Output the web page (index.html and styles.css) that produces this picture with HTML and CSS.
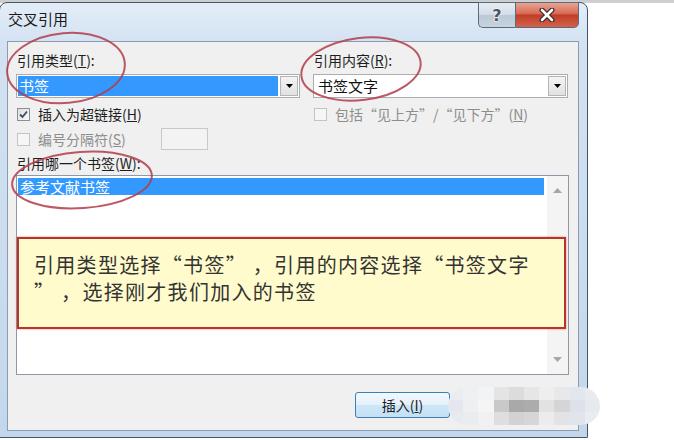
FILE: index.html
```html
<!DOCTYPE html>
<html lang="zh-CN">
<head>
    <meta charset="UTF-8">
    <title>交叉引用</title>
    <link rel="stylesheet" href="styles.css">
</head>
<body>
<div class="desk">
    <div class="window">
        <!-- title bar -->
        <div class="titlebar">
            <span class="title">交叉引用</span>
            <div class="caps">
                <div class="cap help">?</div>
                <div class="cap close">
                    <svg width="16" height="14" viewBox="0 0 16 14">
                        <path d="M3 2 L13 12 M13 2 L3 12" stroke="#3b2a28" stroke-width="5" stroke-linecap="round"/>
                        <path d="M3 2 L13 12 M13 2 L3 12" stroke="#fff" stroke-width="2.6" stroke-linecap="round"/>
                    </svg>
                </div>
            </div>
        </div>

        <div class="client">
            <div class="top-grid">
                <div class="label">引用类型(<u>T</u>):</div>
                <div class="label">引用内容(<u>R</u>):</div>

                <div class="combo">
                    <div class="combo-val sel">书签</div>
                    <div class="combo-arrow"><svg width="7" height="4" viewBox="0 0 7 4"><path d="M0 0 H7 L3.5 4 Z" fill="#000"/></svg></div>
                </div>
                <div class="combo">
                    <div class="combo-val">书签文字</div>
                    <div class="combo-arrow"><svg width="7" height="4" viewBox="0 0 7 4"><path d="M0 0 H7 L3.5 4 Z" fill="#000"/></svg></div>
                </div>

                <div class="check-row">
                    <span class="cb checked"><svg width="11" height="11" viewBox="0 0 11 11"><path d="M2 5.5 L4.5 8 L9 2.5" stroke="#3d4a5c" stroke-width="1.8" fill="none"/></svg></span>
                    <span>插入为超链接(<u>H</u>)</span>
                </div>
                <div class="check-row disabled">
                    <span class="cb"></span>
                    <span>包括“见上方”/“见下方”(<u>N</u>)</span>
                </div>
            </div>

            <div class="check-row disabled sep-row">
                <span class="cb"></span>
                <span>编号分隔符(<u>S</u>)</span>
                <span class="textbox"></span>
            </div>

            <div class="label which">引用哪一个书签(<u>W</u>):</div>

            <div class="listbox">
                <div class="list">
                    <div class="item sel">参考文献书签</div>
                </div>
                <div class="scroll">
                    <svg width="9" height="5" viewBox="0 0 9 5"><path d="M0 5 L4.5 0 L9 5 Z" fill="#a6a6a6"/></svg>
                    <svg width="9" height="5" viewBox="0 0 9 5"><path d="M0 0 H9 L4.5 5 Z" fill="#a6a6a6"/></svg>
                </div>
                <div class="note">引用类型选择“书签” ，引用的内容选择“书签文字<br>” ，选择刚才我们加入的书签</div>
            </div>

            <div class="btnrow">
                <div class="btn">插入(<u>I</u>)</div>
                <div class="btn">取消</div>
            </div>
        </div>
    </div>

    <!-- red hand-drawn marks -->
    <svg class="marks" width="674" height="440" viewBox="0 0 674 440">
        <ellipse cx="66" cy="68" rx="59" ry="35" transform="rotate(-5 66 68)"/>
        <ellipse cx="361" cy="69" rx="60" ry="31" transform="rotate(-7 361 69)"/>
        <ellipse cx="82" cy="180" rx="70" ry="28" transform="rotate(-4 82 180)"/>
    </svg>

    <!-- mosaic over the buttons -->
    <div class="mosaic">
        <i style="background:#e9edf2"></i><i style="background:#eef0f3"></i><i style="background:#f2f3f5"></i><i style="background:#e4e4e4"></i><i style="background:#dcdcdc"></i><i style="background:#e6e6e6"></i><i style="background:#eeeeee"></i><i style="background:#e8e8ea"></i><i style="background:#e2e7ee"></i><i style="background:#e8ecf1"></i>
        <i style="background:#e4e8ee"></i><i style="background:#eeeff1"></i><i style="background:#f5f5f5"></i><i style="background:#c9c9c9"></i><i style="background:#a9a9a9"></i><i style="background:#acacac"></i><i style="background:#e2e2e2"></i><i style="background:#d5d5d7"></i><i style="background:#dde2ea"></i><i style="background:#e6e9ee"></i>
        <i style="background:#e7ebf0"></i><i style="background:#eaecef"></i><i style="background:#f1f1f2"></i><i style="background:#dedede"></i><i style="background:#d2d2d2"></i><i style="background:#d6d6d6"></i><i style="background:#ececec"></i><i style="background:#e3e3e5"></i><i style="background:#e0e5ec"></i><i style="background:#e9ecf0"></i>
    </div>
</div>
</body>
</html>
```

FILE: styles.css
```css
* {
    margin: 0;
    padding: 0;
    box-sizing: border-box;
}

html, body {
    width: 674px;
    height: 440px;
    overflow: hidden;
    background: #fff;
}

body {
    font-family: "Noto Sans CJK SC", "Noto Sans", sans-serif;
    font-size: 14px;
    color: #1e1e1e;
}

u {
    text-decoration: underline;
    text-underline-offset: 1px;
}

.desk {
    position: relative;
    width: 674px;
    height: 440px;
    padding-top: 2px;
    background: linear-gradient(#cccccc 0, #d2d2d2 3px, #fff 3px);
}

/* window frame */
.window {
    width: 589px;
    height: 436px;
    margin-left: -1px;
    border: 1px solid #45566b;
    border-radius: 8px 8px 0 0;
    background: linear-gradient(#e3edf8 0, #d3e2f2 40px, #c3d7ec 100%);
    display: flex;
    flex-direction: column;
}

.titlebar {
    height: 38px;
    flex: none;
    display: flex;
    justify-content: space-between;
    align-items: flex-start;
    padding: 0 8px;
}

.title {
    margin-top: 6px;
    line-height: 20px;
    font-size: 15px;
    color: #1a1a1a;
}

.caps {
    display: flex;
    margin-top: -1px;
}

.cap {
    height: 26px;
    border: 1px solid #5b6b7e;
    display: flex;
    justify-content: center;
    align-items: center;
}

.help {
    width: 37px;
    border-right: none;
    border-radius: 0 0 0 5px;
    background: linear-gradient(#e6ecf3 0, #d2dbe6 50%, #bcc8d6 51%, #c9d3df 100%);
    font: bold 16px "DejaVu Sans", sans-serif;
    color: #4a5566;
    text-shadow: 0 0 2px #fff, 0 0 2px #fff;
}

.close {
    width: 64px;
    border-radius: 0 0 5px 0;
    background: linear-gradient(#e8a493 0, #d66a54 45%, #c03d27 50%, #d3624b 100%);
}

/* client area */
.client {
    height: 390px;
    margin: 0 8px 0 7px;
    border: 1px solid #8b9cb1;
    background: #f0f0f0;
    padding: 9px 9px 0 8px;
    display: flex;
    flex-direction: column;
}

.top-grid {
    display: grid;
    grid-template-columns: 284px 255px;
    column-gap: 13px;
}

.label {
    height: 18px;
    line-height: 18px;
    font-size: 14px;
    padding-left: 1px;
}

.combo {
    margin-top: 5px;
    height: 24px;
    border: 1px solid #abadb3;
    background: #fff;
    display: flex;
    padding: 1px;
}

.combo-val {
    flex: 1;
    font-size: 15px;
    line-height: 20px;
    padding-left: 3px;
    color: #111;
}

.combo-val.sel {
    background: #3399ff;
    color: #fff;
    margin-right: 2px;
    padding-left: 1px;
}

.combo-arrow {
    width: 18px;
    border: 1px solid #b5b5b5;
    background: linear-gradient(#f4f4f4, #e1e1e1);
    display: flex;
    justify-content: center;
    align-items: center;
}

.check-row {
    margin-top: 6px;
    height: 20px;
    display: flex;
    align-items: center;
    gap: 8px;
    padding-left: 1px;
    font-size: 14px;
}

.check-row.disabled {
    color: #8d8d8d;
}

.cb {
    width: 13px;
    height: 13px;
    flex: none;
    border: 1px solid #8e8f8f;
    background: linear-gradient(135deg, #dcdcdc, #fbfbfb);
    display: flex;
    justify-content: center;
    align-items: center;
}

.disabled .cb {
    border-color: #c3c3c3;
    background: #f6f6f6;
}

.sep-row {
    margin-top: 3px;
    height: 24px;
}

.textbox {
    width: 47px;
    height: 22px;
    margin-left: 27px;
    border: 1px solid #c9c9c9;
    background: #f3f3f3;
}

.which {
    margin-top: 3px;
}

/* list of bookmarks */
.listbox {
    position: relative;
    width: 553px;
    height: 200px;
    margin-top: 3px;
    border: 1px solid #8e98a6;
    background: #fff;
    display: flex;
}

.list {
    flex: 1;
    padding: 2px 3px 0 1px;
}

.item.sel {
    height: 17px;
    line-height: 17px;
    padding-left: 2px;
    background: #3399ff;
    color: #fff;
    font-size: 15px;
}

.scroll {
    width: 21px;
    background: #f4f4f4;
    display: flex;
    flex-direction: column;
    justify-content: space-between;
    align-items: center;
    padding: 12px 0 12px;
}

.note {
    position: absolute;
    left: 0;
    top: 61px;
    width: 549px;
    height: 92px;
    border: 2px solid #b8332c;
    box-shadow: 0 0 2px rgba(200, 60, 50, 0.6);
    background: #fffbcc;
    padding: 12px 0 0 15px;
    font-size: 20px;
    line-height: 27px;
    letter-spacing: 1.3px;
    color: #333;
}

.btnrow {
    margin-top: 17px;
    padding-left: 339px;
    display: flex;
    gap: 10px;
}

.btn {
    width: 95px;
    height: 26px;
    border: 1px solid #3c7fb1;
    border-radius: 3px;
    background: linear-gradient(#f2f8fd 0, #e4f1fb 50%, #cde6f7 51%, #c3e0f5 100%);
    display: flex;
    justify-content: center;
    align-items: center;
    font-size: 14px;
}

.marks {
    position: absolute;
    left: 0;
    top: 0;
    pointer-events: none;
}

.marks ellipse {
    fill: none;
    stroke: #b23c4a;
    stroke-width: 2;
    opacity: 0.85;
}

.mosaic {
    position: absolute;
    left: 448px;
    top: 387px;
    width: 152px;
    height: 38px;
    border-radius: 19px;
    overflow: hidden;
    display: grid;
    grid-template-columns: repeat(10, 1fr);
    grid-template-rows: repeat(3, 1fr);
}
```
